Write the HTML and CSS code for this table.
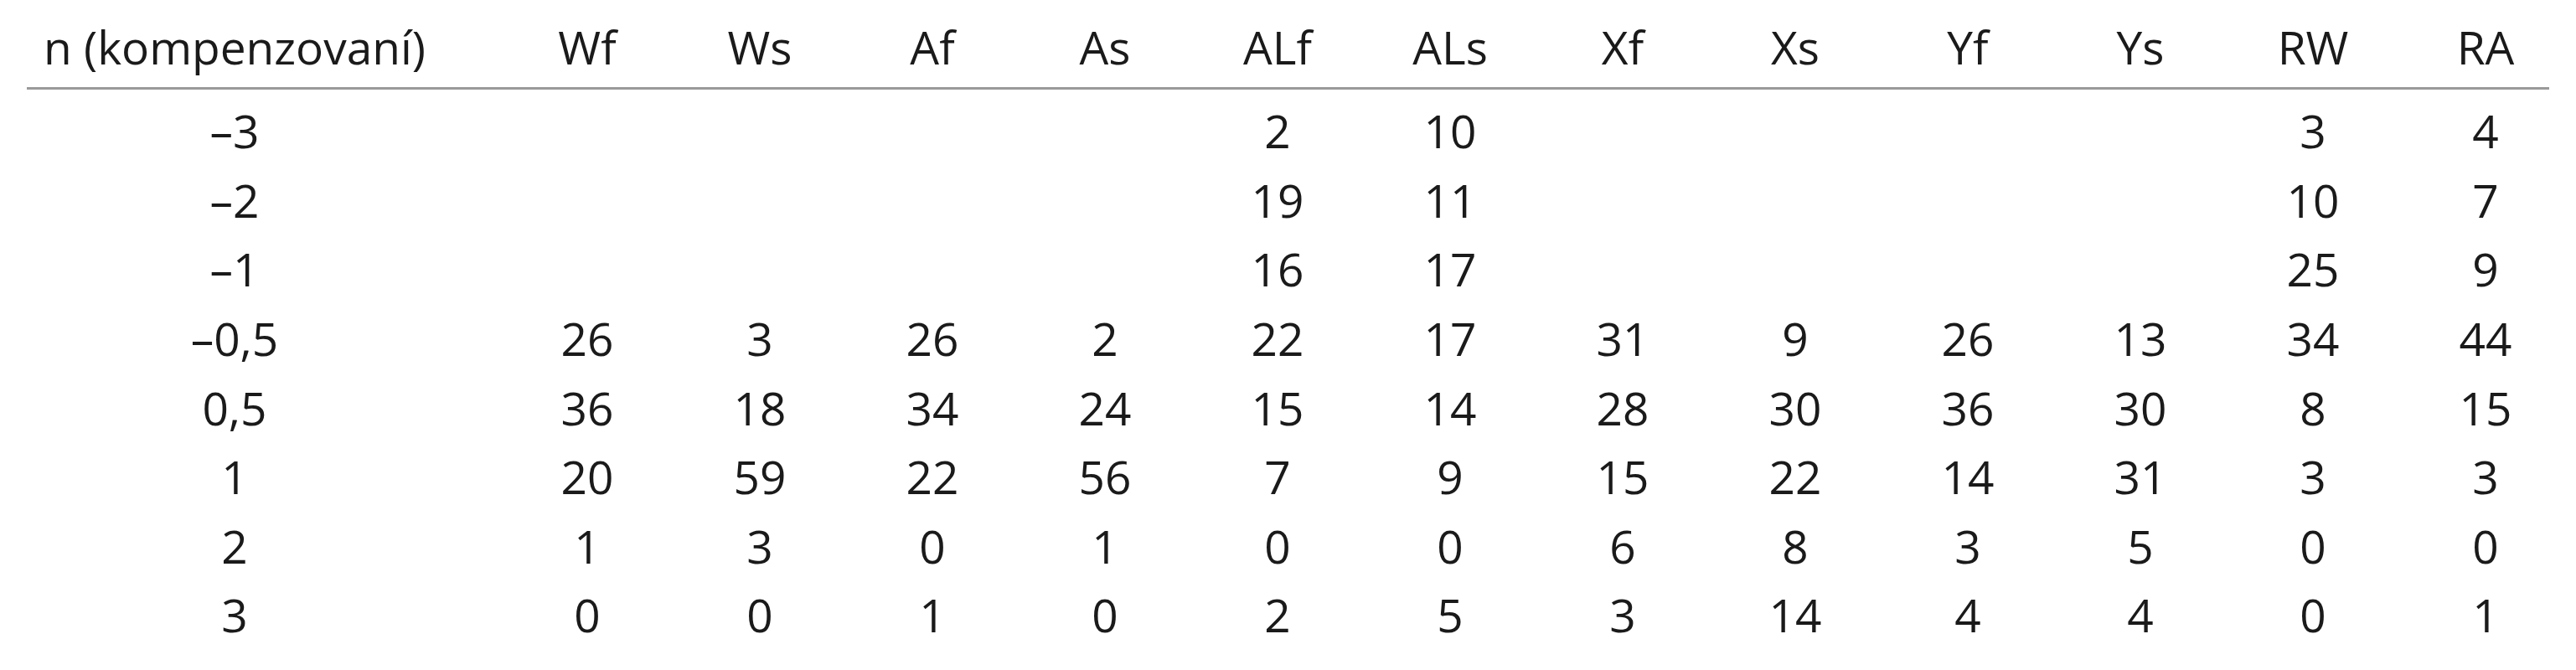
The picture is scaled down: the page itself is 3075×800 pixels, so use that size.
FILE: index.html
```html
<!DOCTYPE html>
<html lang="cs">
<head>
<meta charset="utf-8">
<title>Tabulka</title>
<link rel="stylesheet" href="styles.css">
</head>
<body>
<div class="table">
  <div class="row head">
    <div class="c first">n (kompenzovaní)</div>
    <div class="c">Wf</div><div class="c">Ws</div><div class="c">Af</div><div class="c">As</div>
    <div class="c">ALf</div><div class="c">ALs</div><div class="c">Xf</div><div class="c">Xs</div>
    <div class="c">Yf</div><div class="c">Ys</div><div class="c">RW</div><div class="c">RA</div>
  </div>
  <div class="tbody">
    <div class="row">
      <div class="c first">–3</div>
      <div class="c"></div><div class="c"></div><div class="c"></div><div class="c"></div>
      <div class="c">2</div><div class="c">10</div><div class="c"></div><div class="c"></div>
      <div class="c"></div><div class="c"></div><div class="c">3</div><div class="c">4</div>
    </div>
    <div class="row">
      <div class="c first">–2</div>
      <div class="c"></div><div class="c"></div><div class="c"></div><div class="c"></div>
      <div class="c">19</div><div class="c">11</div><div class="c"></div><div class="c"></div>
      <div class="c"></div><div class="c"></div><div class="c">10</div><div class="c">7</div>
    </div>
    <div class="row">
      <div class="c first">–1</div>
      <div class="c"></div><div class="c"></div><div class="c"></div><div class="c"></div>
      <div class="c">16</div><div class="c">17</div><div class="c"></div><div class="c"></div>
      <div class="c"></div><div class="c"></div><div class="c">25</div><div class="c">9</div>
    </div>
    <div class="row">
      <div class="c first">–0,5</div>
      <div class="c">26</div><div class="c">3</div><div class="c">26</div><div class="c">2</div>
      <div class="c">22</div><div class="c">17</div><div class="c">31</div><div class="c">9</div>
      <div class="c">26</div><div class="c">13</div><div class="c">34</div><div class="c">44</div>
    </div>
    <div class="row">
      <div class="c first">0,5</div>
      <div class="c">36</div><div class="c">18</div><div class="c">34</div><div class="c">24</div>
      <div class="c">15</div><div class="c">14</div><div class="c">28</div><div class="c">30</div>
      <div class="c">36</div><div class="c">30</div><div class="c">8</div><div class="c">15</div>
    </div>
    <div class="row">
      <div class="c first">1</div>
      <div class="c">20</div><div class="c">59</div><div class="c">22</div><div class="c">56</div>
      <div class="c">7</div><div class="c">9</div><div class="c">15</div><div class="c">22</div>
      <div class="c">14</div><div class="c">31</div><div class="c">3</div><div class="c">3</div>
    </div>
    <div class="row">
      <div class="c first">2</div>
      <div class="c">1</div><div class="c">3</div><div class="c">0</div><div class="c">1</div>
      <div class="c">0</div><div class="c">0</div><div class="c">6</div><div class="c">8</div>
      <div class="c">3</div><div class="c">5</div><div class="c">0</div><div class="c">0</div>
    </div>
    <div class="row">
      <div class="c first">3</div>
      <div class="c">0</div><div class="c">0</div><div class="c">1</div><div class="c">0</div>
      <div class="c">2</div><div class="c">5</div><div class="c">3</div><div class="c">14</div>
      <div class="c">4</div><div class="c">4</div><div class="c">0</div><div class="c">1</div>
    </div>
  </div>
</div>
</body>
</html>
```

FILE: styles.css
```css
html, body {
  margin: 0;
  padding: 0;
  background: #ffffff;
}

body {
  font-family: "Open Sans", "Noto Sans", "DejaVu Sans", sans-serif;
  font-size: 55px;
  color: #1a1a1a;
}

.table {
  width: 3011px;
  margin: 15px 0 0 32px;
}

.row {
  display: grid;
  grid-template-columns: 566px repeat(12, 206px);
  height: 82.6px;
  line-height: 82.6px;
}

.c {
  text-align: center;
  white-space: nowrap;
}

.c.first {
  padding-right: 70px;
}

.head {
  padding-bottom: 6px;
  border-bottom: 3px solid #9a9a9a;
}

.tbody {
  padding-top: 8.6px;
}
```
